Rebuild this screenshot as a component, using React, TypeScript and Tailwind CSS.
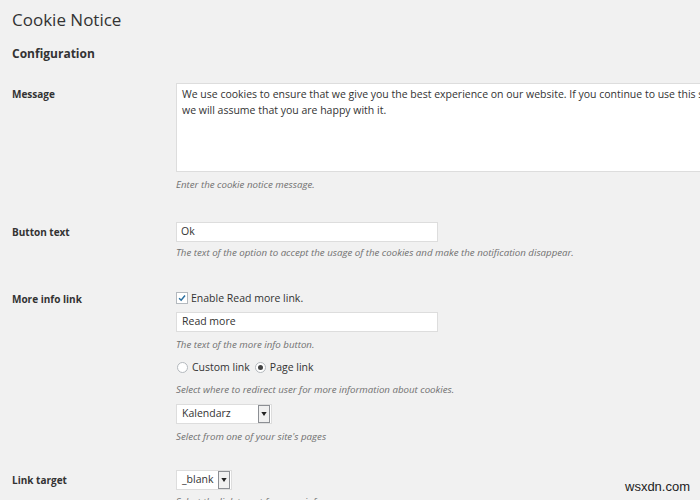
import React from "react";

const font = { fontFamily: '"Open Sans", "Noto Sans", sans-serif' };

function Checkbox() {
  return (
    <span className="inline-flex h-[12px] w-[12px] items-center justify-center border border-[#b4b9be] bg-white">
      <svg viewBox="0 0 12 12" className="h-[10px] w-[10px]">
        <path d="M2.5 6.2 L5 8.6 L9.6 3" fill="none" stroke="#2a6fa0" strokeWidth="1.8" />
      </svg>
    </span>
  );
}

function Radio({ checked }: { checked?: boolean }) {
  return (
    <span className="inline-flex h-[11px] w-[11px] items-center justify-center rounded-full border border-[#b4b9be] bg-white">
      {checked && <span className="h-[5px] w-[5px] rounded-full bg-[#444]" />}
    </span>
  );
}

function Select({ value, width }: { value: string; width: string }) {
  return (
    <div className={`flex h-[20px] items-center border border-[#ddd] bg-white ${width}`}>
      <span className="flex-1 pl-[5px] text-[10.5px] text-[#333]">{value}</span>
      <span className="mr-[1px] flex h-[18px] w-[12px] items-center justify-center border border-[#8c8f94] bg-[#f0f0f0]">
        <svg viewBox="0 0 8 6" className="h-[4px] w-[6px]">
          <path d="M0 0 H8 L4 6 Z" fill="#222" />
        </svg>
      </span>
    </div>
  );
}

function Desc({ children }: { children: React.ReactNode }) {
  return <p className="whitespace-nowrap text-[9.7px] italic leading-[14px] text-[#707070]">{children}</p>;
}

const label = "w-[164px] shrink-0 text-[10px] font-bold leading-[16px] text-[#333]";

export default function App() {
  return (
    <div className="relative h-[500px] w-[700px] overflow-hidden bg-[#f1f1f1] text-[#444]" style={font}>
      <div className="pl-3">
        <h1 className="pt-[6px] text-[17px] leading-[28px] text-[#333]">Cookie Notice</h1>
        <h2 className="mt-[12px] text-[12px] font-bold leading-[16px] text-[#333]">Configuration</h2>

        {/* Message */}
        <div className="mt-[21px] flex">
          <div className={`${label} pt-[3px]`}>Message</div>
          <div className="shrink-0">
            <div className="h-[89px] w-[560px] border border-[#ddd] bg-white px-[5px] pt-[2px] text-[10.5px] leading-[16px] text-[#333]">
              <div className="whitespace-nowrap">
                We use cookies to ensure that we give you the best experience on our website. If you continue to use this site
              </div>
              <div className="whitespace-nowrap">we will assume that you are happy with it.</div>
            </div>
            <div className="mt-[6px]">
              <Desc>Enter the cookie notice message.</Desc>
            </div>
          </div>
        </div>

        {/* Button text */}
        <div className="mt-[30px] flex">
          <div className={`${label} pt-[2px]`}>Button text</div>
          <div>
            <div className="flex h-[20px] w-[262px] items-center border border-[#ddd] bg-white pl-[4px] text-[10.5px] text-[#333]">
              Ok
            </div>
            <div className="mt-[4px]">
              <Desc>The text of the option to accept the usage of the cookies and make the notification disappear.</Desc>
            </div>
          </div>
        </div>

        {/* More info link */}
        <div className="mt-[31px] flex">
          <div className={label}>More info link</div>
          <div>
            <div className="flex items-center gap-[3px] text-[10.5px] leading-[14px] text-[#333]">
              <Checkbox />
              <span>Enable Read more link.</span>
            </div>
            <div className="mt-[7px] flex h-[20px] w-[262px] items-center border border-[#ddd] bg-white pl-[5px] text-[10.5px] text-[#333]">
              Read more
            </div>
            <div className="mt-[6px]">
              <Desc>The text of the more info button.</Desc>
            </div>
            <div className="mt-[8px] flex items-center text-[10.5px] leading-[14px] text-[#333]">
              <span className="ml-[1px] flex"><Radio /></span>
              <span className="ml-[4px]">Custom link</span>
              <span className="ml-[5px] flex"><Radio checked /></span>
              <span className="ml-[4px]">Page link</span>
            </div>
            <div className="mt-[9px]">
              <Desc>Select where to redirect user for more information about cookies.</Desc>
            </div>
            <div className="mt-[7px]">
              <Select value="Kalendarz" width="w-[96px]" />
            </div>
            <div className="mt-[6px]">
              <Desc>Select from one of your site's pages</Desc>
            </div>
          </div>
        </div>

        {/* Link target */}
        <div className="mt-[26px] flex">
          <div className={`${label} pt-[2px]`}>Link target</div>
          <div>
            <Select value="_blank" width="w-[56px]" />
            <div className="mt-[5px]">
              <Desc>Select the link target for more info page.</Desc>
            </div>
          </div>
        </div>
      </div>

      <div
        className="absolute left-[625px] top-[477px] text-[13px] text-[#222]"
        style={{ fontFamily: '"Liberation Sans", Arial, sans-serif' }}
      >
        wsxdn.com
      </div>
    </div>
  );
}
